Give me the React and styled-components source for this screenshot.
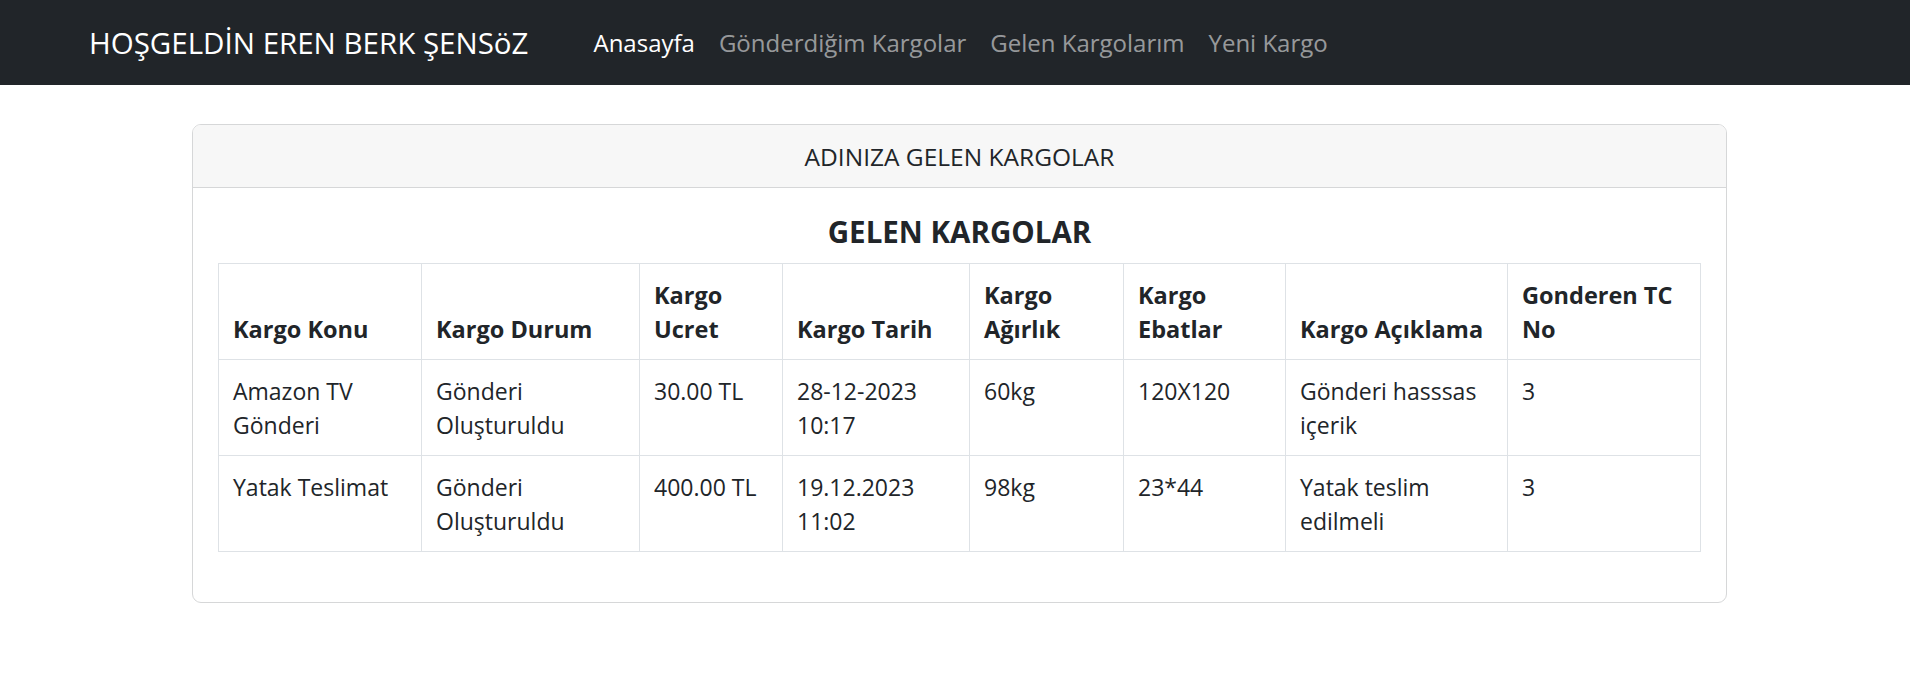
import React from "react";
import styled, { createGlobalStyle } from "styled-components";

const GlobalStyle = createGlobalStyle`
  html, body {
    margin: 0;
    padding: 0;
    background: #fff;
  }
  body {
    font-family: "Open Sans", "Noto Sans", sans-serif;
    color: #212529;
  }
  * {
    box-sizing: border-box;
  }
`;

const links = [
  { label: "Anasayfa", active: true },
  { label: "Gönderdiğim Kargolar" },
  { label: "Gelen Kargolarım" },
  { label: "Yeni Kargo" },
];

const columns = [
  { title: "Kargo Konu", width: 203 },
  { title: "Kargo Durum", width: 218 },
  { title: "Kargo Ucret", width: 143 },
  { title: "Kargo Tarih", width: 187 },
  { title: "Kargo Ağırlık", width: 154 },
  { title: "Kargo Ebatlar", width: 162 },
  { title: "Kargo Açıklama", width: 222 },
  { title: "Gonderen TC No", width: 193 },
];

const kargolar = [
  {
    id: 1,
    konu: "Amazon TV Gönderi",
    durum: "Gönderi Oluşturuldu",
    ucret: "30.00 TL",
    tarih: "28-12-2023 10:17",
    agirlik: "60kg",
    ebat: "120X120",
    aciklama: "Gönderi hasssas içerik",
    tc: "3",
  },
  {
    id: 2,
    konu: "Yatak Teslimat",
    durum: "Gönderi Oluşturuldu",
    ucret: "400.00 TL",
    tarih: "19.12.2023 11:02",
    agirlik: "98kg",
    ebat: "23*44",
    aciklama: "Yatak teslim edilmeli",
    tc: "3",
  },
];

function App() {
  return (
    <>
      <GlobalStyle />
      <Navbar>
        <Brand>HOŞGELDİN EREN BERK ŞENSöZ</Brand>
        <NavList>
          {links.map((link) => (
            <NavLink key={link.label} active={link.active ? 1 : 0}>
              {link.label}
            </NavLink>
          ))}
        </NavList>
      </Navbar>

      <Main>
        <Card>
          <CardHeader>ADINIZA GELEN KARGOLAR</CardHeader>
          <CardBody>
            <Title>GELEN KARGOLAR</Title>
            <Table>
              <colgroup>
                {columns.map((col) => (
                  <col key={col.title} style={{ width: col.width }} />
                ))}
              </colgroup>
              <thead>
                <tr>
                  {columns.map((col) => (
                    <Th key={col.title}>{col.title}</Th>
                  ))}
                </tr>
              </thead>
              <tbody>
                {kargolar.map((k) => (
                  <tr key={k.id}>
                    <Td>{k.konu}</Td>
                    <Td>{k.durum}</Td>
                    <Td>{k.ucret}</Td>
                    <Td>{k.tarih}</Td>
                    <Td>{k.agirlik}</Td>
                    <Td>{k.ebat}</Td>
                    <Td>{k.aciklama}</Td>
                    <Td>{k.tc}</Td>
                  </tr>
                ))}
              </tbody>
            </Table>
          </CardBody>
        </Card>
      </Main>
    </>
  );
}

export default App;

const Navbar = styled.nav`
  height: 85px;
  background-color: #212529;
  display: flex;
  align-items: center;
  padding: 0 0 0 89px;
`;

const Brand = styled.a`
  font-size: 29.5px;
  color: #fff;
  white-space: nowrap;
  margin-right: 53px;
  cursor: pointer;
`;

const NavList = styled.div`
  display: flex;
  align-items: center;
`;

const NavLink = styled.a`
  font-size: 24px;
  padding: 0 12px;
  color: ${(props) => (props.active ? "#ffffff" : "rgba(255, 255, 255, 0.55)")};
  cursor: pointer;
  white-space: nowrap;
`;

const Main = styled.main`
  padding: 39px 0 0 9px;
  display: flex;
  justify-content: center;
`;

const Card = styled.div`
  width: 1535px;
  border: 1px solid #d6d7d8;
  border-radius: 9px;
  overflow: hidden;
  background: #fff;
`;

const CardHeader = styled.div`
  height: 63px;
  display: flex;
  align-items: center;
  justify-content: center;
  background-color: #f7f7f7;
  border-bottom: 1px solid #d6d7d8;
  font-size: 24.5px;
`;

const CardBody = styled.div`
  padding: 26px 25px 50px;
`;

const Title = styled.h3`
  margin: 0 0 13px;
  text-align: center;
  font-size: 29.5px;
  line-height: 36px;
  font-weight: 700;
`;

const Table = styled.table`
  width: 1482px;
  table-layout: fixed;
  border-collapse: collapse;
  font-size: 23px;
  line-height: 34px;
`;

const Th = styled.th`
  text-align: left;
  vertical-align: bottom;
  font-size: 23.5px;
  font-weight: 700;
  padding: 14px 14px 13px;
  border: 1px solid #dee2e6;
`;

const Td = styled.td`
  vertical-align: top;
  padding: 14px 14px 13px;
  border: 1px solid #dee2e6;
`;
